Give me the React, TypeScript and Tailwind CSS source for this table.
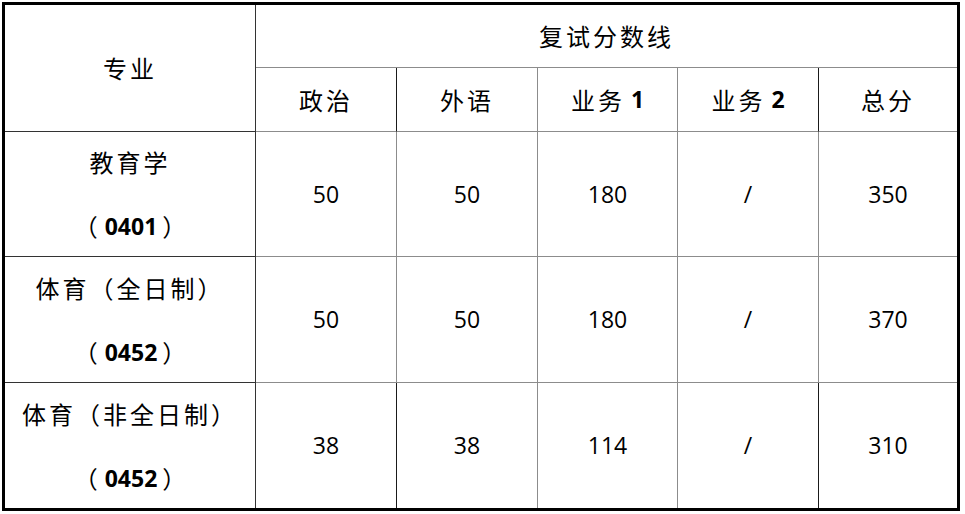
const cjk = "font-['Noto_Sans_CJK_SC','Noto_Sans_CJK_JP',sans-serif]"
const num = "font-['Open_Sans','Liberation_Sans',sans-serif]"

const gray = "border-[#8c8c8c]"

type Row = { name: string; code: string; values: string[] }

const rows: Row[] = [
    { name: "教育学", code: "0401", values: ["50", "50", "180", "/", "350"] },
    { name: "体育（全日制）", code: "0452", values: ["50", "50", "180", "/", "370"] },
    { name: "体育（非全日制）", code: "0452", values: ["38", "38", "114", "/", "310"] },
]

const colBorders = [
    "border-r border-[#1a1a1a]",
    "border-r border-[#8c8c8c]",
    "border-r border-[#8c8c8c]",
    "border-r border-[#1a1a1a]",
    "",
]

function Code({ code }: { code: string }) {
    return (
        <div className="h-[32px] leading-[32px] flex items-center justify-center">
            <span className={`${cjk} text-[24px] mr-[7px]`}>（</span>
            <span className={`${num} text-[23px] font-bold`}>{code}</span>
            <span className={`${cjk} text-[24px] ml-[5px]`}>）</span>
        </div>
    )
}

export default function App() {
    return (
        <div className="w-[965px] h-[514px] bg-white pt-[2px] pl-[2px] text-black">
            <div className="w-[958px] h-[509px] border-[3px] border-black grid grid-cols-[251px_141px_141px_140px_141px_138px] grid-rows-[63px_64px_125px_126px_125px]">
                {/* header */}
                <div className={`row-span-2 border-r border-b border-[#333] ${gray} flex items-center justify-center ${cjk} text-[24px] tracking-[3px]`}>
                    专业
                </div>
                <div className={`col-span-5 border-b ${gray} flex items-center justify-center ${cjk} text-[24px] tracking-[3px]`}>
                    复试分数线
                </div>
                <div className={`border-r border-b border-[#1a1a1a] border-b-[#8c8c8c] flex items-center justify-center ${cjk} text-[24px] tracking-[3px]`}>
                    政治
                </div>
                <div className={`border-r border-b ${gray} flex items-center justify-center ${cjk} text-[24px] tracking-[3px]`}>
                    外语
                </div>
                <div className={`border-r border-b ${gray} flex items-center justify-center gap-[6px] ${cjk} text-[24px] tracking-[3px]`}>
                    <span>业务</span>
                    <span className={`${num} font-bold text-[23px] tracking-normal`}>1</span>
                </div>
                <div className={`border-r border-b border-[#1a1a1a] border-b-[#8c8c8c] flex items-center justify-center gap-[6px] ${cjk} text-[24px] tracking-[3px]`}>
                    <span>业务</span>
                    <span className={`${num} font-bold text-[23px] tracking-normal`}>2</span>
                </div>
                <div className={`border-b ${gray} flex items-center justify-center ${cjk} text-[24px] tracking-[3px]`}>
                    总分
                </div>

                {/* body */}
                {rows.map((r, ri) => {
                    const last = ri === rows.length - 1
                    const bb = last ? "" : `border-b ${gray}`
                    return [
                        <div
                            key={`n${ri}`}
                            className={`border-r border-[#333] ${bb} flex flex-col items-center justify-center gap-[32px]`}
                        >
                            <div className={`h-[32px] leading-[32px] ${cjk} text-[24px] tracking-[3px] whitespace-nowrap`}>
                                {r.name}
                            </div>
                            <Code code={r.code} />
                        </div>,
                        ...r.values.map((v, vi) => (
                            <div
                                key={`v${ri}-${vi}`}
                                className={`${colBorders[vi]} ${bb} ${last ? "" : "border-b-[#8c8c8c]"} flex items-center justify-center ${num} text-[23px]`}
                            >
                                {v}
                            </div>
                        )),
                    ]
                })}
            </div>
        </div>
    )
}
